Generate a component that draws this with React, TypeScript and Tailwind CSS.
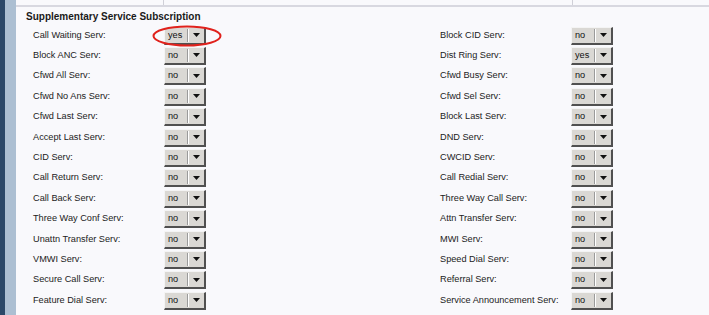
import React from "react";

const left = [
  ["Call Waiting Serv:", "yes"],
  ["Block ANC Serv:", "no"],
  ["Cfwd All Serv:", "no"],
  ["Cfwd No Ans Serv:", "no"],
  ["Cfwd Last Serv:", "no"],
  ["Accept Last Serv:", "no"],
  ["CID Serv:", "no"],
  ["Call Return Serv:", "no"],
  ["Call Back Serv:", "no"],
  ["Three Way Conf Serv:", "no"],
  ["Unattn Transfer Serv:", "no"],
  ["VMWI Serv:", "no"],
  ["Secure Call Serv:", "no"],
  ["Feature Dial Serv:", "no"],
];

const right = [
  ["Block CID Serv:", "no"],
  ["Dist Ring Serv:", "yes"],
  ["Cfwd Busy Serv:", "no"],
  ["Cfwd Sel Serv:", "no"],
  ["Block Last Serv:", "no"],
  ["DND Serv:", "no"],
  ["CWCID Serv:", "no"],
  ["Call Redial Serv:", "no"],
  ["Three Way Call Serv:", "no"],
  ["Attn Transfer Serv:", "no"],
  ["MWI Serv:", "no"],
  ["Speed Dial Serv:", "no"],
  ["Referral Serv:", "no"],
  ["Service Announcement Serv:", "no"],
];

function Select({ value }: { value: string }) {
  return (
    <div className="flex h-[18px] w-[42px] bg-[#dad8d4] border-t border-l border-t-[#f4f4f4] border-l-[#f4f4f4] border-b-2 border-r-2 border-b-[#505050] border-r-[#505050]">
      <span className="w-[22px] pl-[3px] text-[9.2px] leading-[15px] text-[#111]">{value}</span>
      <div className="my-[1px] w-[2px] border-l border-l-[#9a9a9a] border-r border-r-[#ffffff]" />
      <div className="flex flex-1 items-center justify-center">
        <svg width="7" height="4" viewBox="0 0 7 4">
          <polygon points="0,0 7,0 3.5,4" fill="#111" />
        </svg>
      </div>
    </div>
  );
}

function Row({ label, value }: { label: string; value: string }) {
  return (
    <div className="flex items-center">
      <span className="w-[131px] text-[9.2px] text-[#222] whitespace-nowrap">{label}</span>
      <Select value={value} />
    </div>
  );
}

export default function App() {
  return (
    <div
      className="flex h-[315px] w-[709px] overflow-hidden"
      style={{ fontFamily: '"Liberation Sans", Arial, sans-serif' }}
    >
      <div className="w-[5px] bg-[#2b4868]" />
      <div className="w-[11px] bg-[#acbfd2]" />
      <div className="relative flex-1 bg-[#f9f9fc]">
        <div className="relative h-[5px]">
          <div className="absolute left-[147px] top-0 h-[5px] w-px bg-[#d0d0d8]" />
          <div className="absolute left-[556px] top-0 h-[5px] w-px bg-[#d0d0d8]" />
        </div>
        <div className="h-[2px] bg-[#d8d8e0]" />
        <div className="h-[18.3px] pl-[10px] pt-[4px] text-[10px] font-bold leading-[12px] text-[#1a1a1a]">
          Supplementary Service Subscription
        </div>
        <div className="flex flex-col">
          {left.map((l, i) => (
            <div key={i} className="flex h-[20.42px] items-center">
              <div className="w-[424px] pl-[17px]">
                <Row label={l[0]} value={l[1]} />
              </div>
              <div>
                <Row label={right[i][0]} value={right[i][1]} />
              </div>
            </div>
          ))}
        </div>
        <svg
          className="pointer-events-none absolute left-[136px] top-[25px]"
          width="70"
          height="22"
          viewBox="0 0 70 22"
        >
          <ellipse cx="35" cy="11" rx="33.5" ry="9.5" fill="none" stroke="#e0221c" strokeWidth="2" />
        </svg>
      </div>
    </div>
  );
}
